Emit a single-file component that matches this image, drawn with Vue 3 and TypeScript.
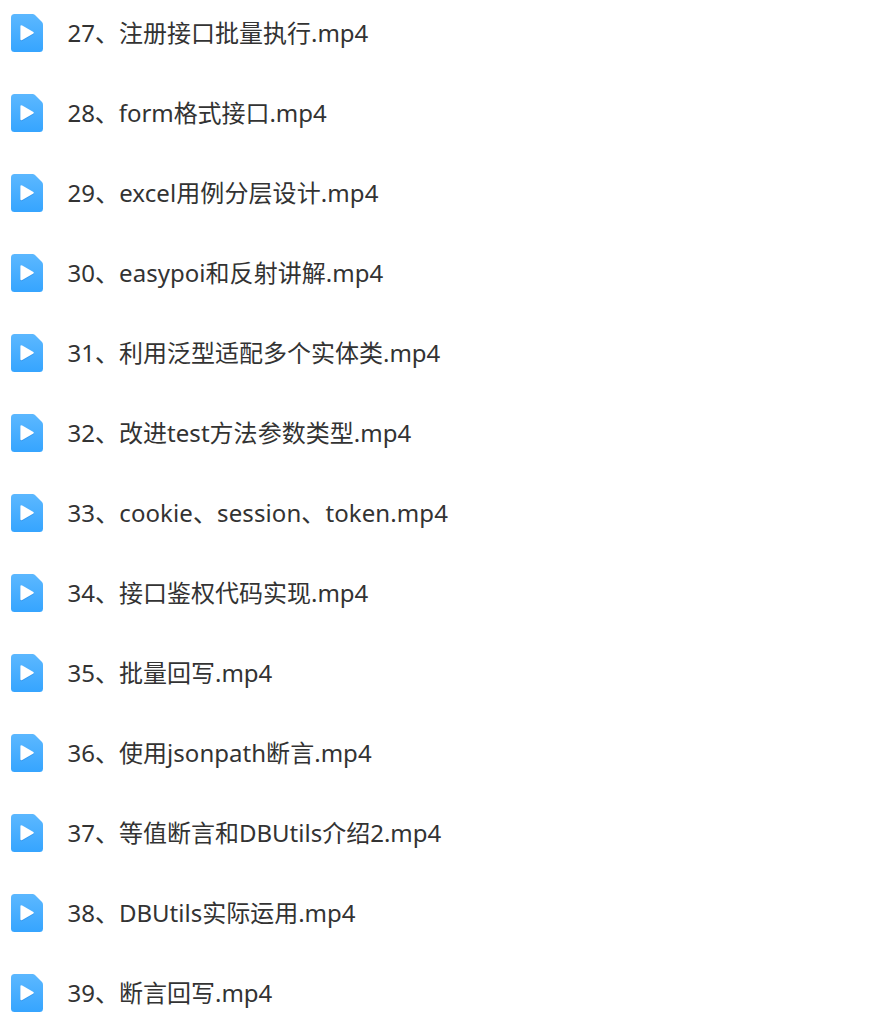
<script setup lang="ts">
interface VideoFile {
  name: string
  tracking: number
}

const files: VideoFile[] = [
  { name: '27、注册接口批量执行.mp4', tracking: 0 },
  { name: '28、form格式接口.mp4', tracking: -0.06 },
  { name: '29、excel用例分层设计.mp4', tracking: 0.09 },
  { name: '30、easypoi和反射讲解.mp4', tracking: 0.04 },
  { name: '31、利用泛型适配多个实体类.mp4', tracking: 0 },
  { name: '32、改进test方法参数类型.mp4', tracking: 0.03 },
  { name: '33、cookie、session、token.mp4', tracking: 0.1 },
  { name: '34、接口鉴权代码实现.mp4', tracking: 0 },
  { name: '35、批量回写.mp4', tracking: 0 },
  { name: '36、使用jsonpath断言.mp4', tracking: 0.03 },
  { name: '37、等值断言和DBUtils介绍2.mp4', tracking: 0 },
  { name: '38、DBUtils实际运用.mp4', tracking: 0 },
  { name: '39、断言回写.mp4', tracking: 0 },
]
</script>

<template>
  <ul class="list">
    <li v-for="file in files" :key="file.name" class="row">
      <svg class="icon" width="32" height="38" viewBox="0 0 32 38">
        <defs>
          <linearGradient id="file-fill" x1="0" y1="0" x2="0" y2="1">
            <stop offset="0" stop-color="#5cb8ff" />
            <stop offset="1" stop-color="#36a5ff" />
          </linearGradient>
        </defs>
        <path d="M3.5 0H21.5Q23 0 24 1L31 8Q32 9 32 10.5V34.5Q32 38 28.5 38H3.5Q0 38 0 34.5V3.5Q0 0 3.5 0Z" fill="url(#file-fill)" />
        <path class="play" d="M9.4 12.6Q9.4 10.6 11.2 11.6L22 17.8Q23.6 18.8 22 19.8L11.2 26Q9.4 27 9.4 25Z" fill="#fff" />
      </svg>
      <span class="name" :style="{ letterSpacing: `${file.tracking}px` }">{{ file.name }}</span>
    </li>
  </ul>
</template>

<style scoped>
.list {
  margin: 0;
  padding: 0 0 0 11px;
  height: 1036px;
  overflow: hidden;
  box-sizing: border-box;
  list-style: none;
  background: #fff;
}
.row {
  display: flex;
  align-items: center;
  gap: 24.5px;
  height: 66px;
  margin-bottom: 14px;
}
.icon {
  flex: none;
}
.play {
  filter: drop-shadow(0 1px 0.7px rgba(20, 110, 200, 0.3));
}
.name {
  font: 24px/32px "Noto Sans", "Noto Sans CJK SC", sans-serif;
  color: #333;
  white-space: nowrap;
}
</style>
